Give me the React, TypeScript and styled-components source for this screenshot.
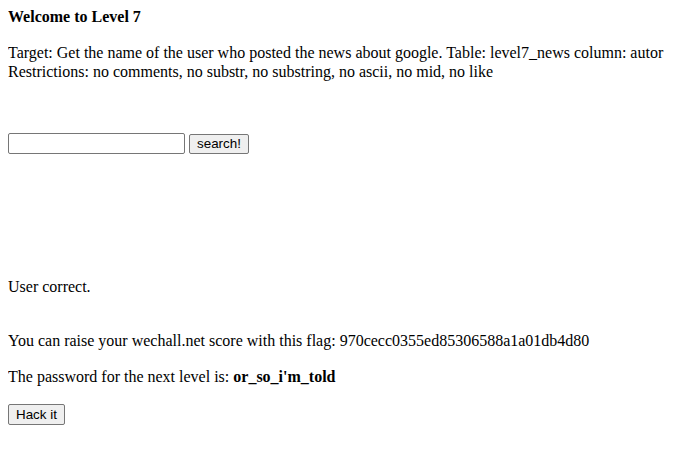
import React from "react";
import styled, { createGlobalStyle } from "styled-components";

const GlobalStyle = createGlobalStyle`
  html, body {
    background: #ffffff;
  }
  body {
    margin: 8px;
    font-family: "Liberation Serif", "Times New Roman", serif;
    font-size: 16px;
    line-height: 18.4px;
    color: #000000;
  }
`;

const Page = styled.div`
  display: flex;
  flex-direction: column;
  align-items: flex-start;
`;

const Title = styled.div`
  font-weight: bold;
`;

const Block = styled.div<{ $gap: number }>`
  margin-top: ${(p) => p.$gap}px;
`;

const Line = styled.div`
  white-space: nowrap;
`;

const SearchForm = styled.form<{ $gap: number }>`
  display: flex;
  align-items: center;
  gap: 4px;
  margin: ${(p) => p.$gap}px 0 0 0;
`;

const TextInput = styled.input`
  box-sizing: border-box;
  width: 177px;
  height: 21px;
  margin: 0;
  padding: 1px 2px;
  border: 1px solid #767676;
  border-radius: 2px;
  background: #ffffff;
  font-family: Arial, "Liberation Sans", sans-serif;
  font-size: 13.333px;
`;

const Button = styled.button<{ $height: number }>`
  box-sizing: border-box;
  height: ${(p) => p.$height}px;
  margin: 0;
  padding: 1px 7px;
  border: 1px solid #767676;
  border-radius: 2px;
  background: #efefef;
  color: #000000;
  font-family: Arial, "Liberation Sans", sans-serif;
  font-size: 13.4px;
  line-height: 16px;
`;

const Strong = styled.b`
  font-weight: bold;
`;

export default function App() {
  return (
    <>
      <GlobalStyle />
      <Page>
        <Title>Welcome to Level 7</Title>
        <Block $gap={18}>
          <Line>
            Target: Get the name of the user who posted the news about google. Table: level7_news column: autor
          </Line>
          <Line>Restrictions: no comments, no substr, no substring, no ascii, no mid, no like</Line>
        </Block>
        <SearchForm $gap={52} onSubmit={(e) => e.preventDefault()}>
          <TextInput type="text" />
          <Button type="submit" $height={20}>search!</Button>
        </SearchForm>
        <Block $gap={124}>
          <Line>User correct.</Line>
        </Block>
        <Block $gap={35}>
          <Line>
            You can raise your wechall.net score with this flag: 970cecc0355ed85306588a1a01db4d80
          </Line>
        </Block>
        <Block $gap={18}>
          <Line>
            The password for the next level is: <Strong>or_so_i'm_told</Strong>
          </Line>
        </Block>
        <Block $gap={18}>
          <Button type="button" $height={21}>Hack it</Button>
        </Block>
      </Page>
    </>
  );
}
